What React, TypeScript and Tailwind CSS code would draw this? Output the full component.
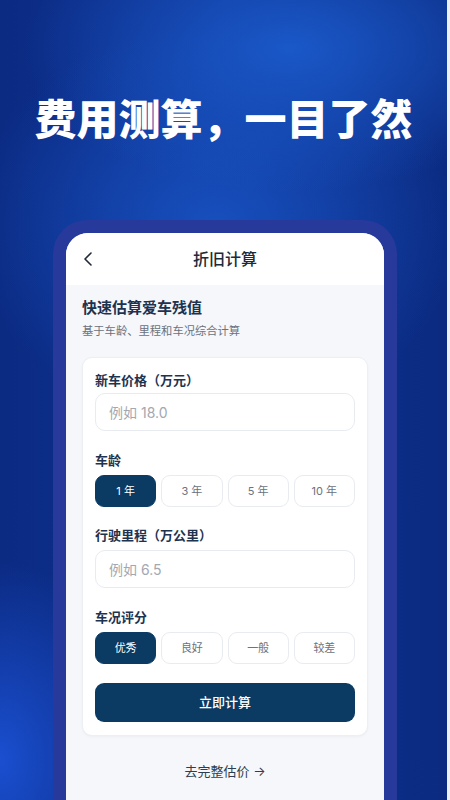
import React, { useState } from "react";
import { ChevronLeft } from "lucide-react";

const ages = ["1 年", "3 年", "5 年", "10 年"];
const conditions = ["优秀", "良好", "一般", "较差"];

function Chips({ items, active, onPick }: { items: string[]; active: number; onPick: (i: number) => void }) {
    return (
        <div className="grid grid-cols-4 gap-[5px] mt-[4px]">
            {items.map((item, i) => (
                <button
                    key={item}
                    onClick={() => onPick(i)}
                    className={
                        i === active
                            ? "h-[32px] rounded-[9px] bg-[#0b3a63] text-white text-[11px] border border-[#0b3a63]"
                            : "h-[32px] rounded-[9px] bg-white text-[#6b7280] text-[11px] border border-[#e8ebf0]"
                    }
                >
                    {item}
                </button>
            ))}
        </div>
    );
}

export default function App() {
    const [age, setAge] = useState(0);
    const [cond, setCond] = useState(0);

    return (
        <div
            className="w-[450px] h-[800px] overflow-hidden flex flex-col border-r-[3px] border-[#eef1f7] bg-[radial-gradient(ellipse_60%_18%_at_65%_6%,#1a58c8_0%,transparent_100%),radial-gradient(ellipse_55%_25%_at_48%_28%,#174fbd_0%,transparent_100%),radial-gradient(ellipse_30%_25%_at_0%_95%,#1a4fd0_0%,transparent_100%),linear-gradient(90deg,#0b2a82_0%,#0f3596_50%,#0b2a80_100%)]"
            style={{ fontFamily: 'Inter, "Noto Sans CJK SC", sans-serif' }}
        >
            <h1 className="pt-[96px] text-center text-white text-[42px] leading-[48px] font-black">
                费用测算，一目了然
            </h1>

            {/* phone frame */}
            <div className="ml-[53px] mt-[76px] w-[344px] flex-1 rounded-t-[34px] bg-[#27399b] px-[13px] pt-[13px]">
                <div className="h-full rounded-t-[22px] bg-[#f5f7fa] overflow-hidden">
                    <div className="h-[52px] bg-white grid grid-cols-[40px_1fr_40px] items-center">
                        <ChevronLeft size={24} strokeWidth={1.6} className="ml-[10px] text-[#1f2937]" />
                        <div className="text-center text-[16px] font-medium text-[#1c2b3a]">折旧计算</div>
                        <div />
                    </div>

                    <div className="px-4 pt-[12px]">
                        <div className="text-[15px] leading-[22px] font-semibold text-[#1d3350]">快速估算爱车残值</div>
                        <div className="mt-[3px] text-[11.3px] leading-[18px] text-[#6b7280]">基于车龄、里程和车况综合计算</div>

                        <div className="mt-[17px] rounded-[10px] bg-white border border-[#eceff3] px-3 pt-[11px] pb-[13px] shadow-[0_1px_3px_rgba(0,0,0,0.04)]">
                            <div className="text-[13px] leading-[22px] font-semibold text-[#1d3350]">新车价格（万元）</div>
                            <div className="mt-[2px] h-[38px] rounded-[10px] border border-[#e8ebf0] flex items-center pl-[13px] text-[14px] text-[#a3a8b0]">
                                例如 18.0
                            </div>

                            <div className="mt-[18px] text-[13px] leading-[22px] font-semibold text-[#1d3350]">车龄</div>
                            <Chips items={ages} active={age} onPick={setAge} />

                            <div className="mt-[17px] text-[13px] leading-[22px] font-semibold text-[#1d3350]">行驶里程（万公里）</div>
                            <div className="mt-[4px] h-[38px] rounded-[10px] border border-[#e8ebf0] flex items-center pl-[13px] text-[14px] text-[#a3a8b0]">
                                例如 6.5
                            </div>

                            <div className="mt-[18px] text-[13px] leading-[22px] font-semibold text-[#1d3350]">车况评分</div>
                            <Chips items={conditions} active={cond} onPick={setCond} />

                            <button className="mt-[19px] w-full h-[39px] rounded-[9px] bg-[#0b3a63] text-white text-[13px] font-medium">
                                立即计算
                            </button>
                        </div>

                        <div className="mt-[25px] text-center text-[13px] leading-[20px] text-[#2d3e50]">去完整估价 →</div>
                    </div>
                </div>
            </div>
        </div>
    );
}
